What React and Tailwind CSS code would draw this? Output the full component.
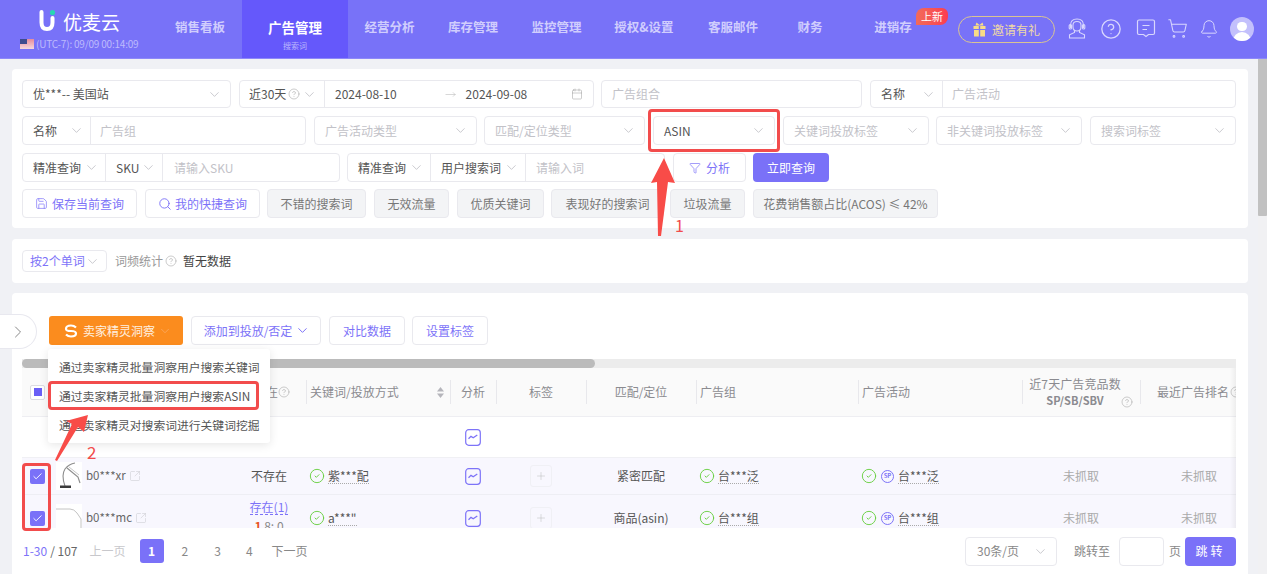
import React from 'react'
import {
  ChevronDown,
  ChevronRight,
  CircleHelp,
  Calendar,
  ShoppingCart,
  Bell,
  Save,
  Search,
  Funnel,
  SquareArrowOutUpRight,
  Plus,
  Check,
  CircleCheck,
  MoveRight,
} from 'lucide-react'

const font = { fontFamily: '"Noto Sans CJK SC", "Noto Sans", sans-serif' }

const navItems = [
  { label: '销售看板', w: 'w-[84px]' },
  { label: '广告管理', w: 'w-[106px]', active: true },
  { label: '经营分析', w: 'w-[83px]' },
  { label: '库存管理', w: 'w-[84px]' },
  { label: '监控管理', w: 'w-[83px]' },
  { label: '授权&设置', w: 'w-[92px]' },
  { label: '客服邮件', w: 'w-[86px]' },
  { label: '财务', w: 'w-[68px]' },
  { label: '进销存', w: 'w-[98px]', badge: true },
]

const tableCols = 'grid grid-cols-[30px_188px_66px_144px_46px_90px_110px_162px_164px_118px_96px] items-center'

function Caret({ className = '' }) {
  return <ChevronDown size={15} strokeWidth={1} className={`text-[#aaaab2] shrink-0 ${className}`} />
}

function SelectBox({ width, text, placeholder, className = '' }) {
  return (
    <div className={`${width} ${className} h-full shrink-0 flex items-center justify-between pl-[10px] pr-[8px] bg-white border border-[#e9e9ee] rounded-[4px]`}>
      <span className={placeholder ? 'text-[#c2c2c8]' : 'text-[#555]'}>{text}</span>
      <Caret />
    </div>
  )
}

function Segment({ width, text, border = true }) {
  return (
    <div className={`${width} h-full shrink-0 flex items-center justify-between pl-[10px] pr-[6px] text-[#555] ${border ? 'border-r border-[#e9e9ee]' : ''}`}>
      <span>{text}</span>
      <Caret />
    </div>
  )
}

function Group({ width, children, className = '' }) {
  return (
    <div className={`${width} ${className} h-full shrink-0 flex items-center bg-white border border-[#e9e9ee] rounded-[4px]`}>
      {children}
    </div>
  )
}

function PresetButton({ width, children, className = '' }) {
  return (
    <div className={`${width} ${className} h-full shrink-0 flex items-center justify-center bg-[#f3f4f6] border border-[#e9e9ee] rounded-[4px] text-[#777]`}>
      {children}
    </div>
  )
}

function ToolButton({ width, children, className = '' }) {
  return (
    <div className={`${width} ${className} h-full shrink-0 flex items-center justify-center bg-white border border-[#e9e9ee] rounded-[4px] text-[#7d73f8]`}>
      {children}
    </div>
  )
}

function TrendIcon() {
  return (
    <svg width="16" height="17" viewBox="0 0 16 17" fill="none" className="mx-auto">
      <rect x="0.7" y="0.7" width="14.6" height="15.6" rx="3" stroke="#7d73f8" strokeWidth="1.2" />
      <path d="M3.5 9.8 L6 7.4 L8.2 8.8 L12.3 6" stroke="#7d73f8" strokeWidth="1.3" />
    </svg>
  )
}

function SortIcon() {
  return (
    <svg width="7" height="11" viewBox="0 0 7 11" fill="#b5b5bb">
      <path d="M3.5 0 L7 4.4 H0 Z" />
      <path d="M3.5 11 L7 6.6 H0 Z" />
    </svg>
  )
}

function LampThumb({ short }) {
  return (
    <svg width="26" height="28" viewBox="0 0 26 28" fill="none" className="shrink-0 bg-white">
      {short ? (
        <path d="M0 5 H14 Q18 5 21 9 L25 15 V28" stroke="#c4c4c4" strokeWidth="1" />
      ) : (
        <>
          <path d="M9 24 Q5 13 9 7 Q13 2 19 1" stroke="#8e8e8e" strokeWidth="1.1" />
          <path d="M11 6 L22 15 L24 21" stroke="#8e8e8e" strokeWidth="1.2" />
          <path d="M13 5 L23 13" stroke="#c6c6c6" strokeWidth="1" />
          <rect x="4" y="23.500" width="11" height="2.500" fill="#3c3c3c" />
        </>
      )}
    </svg>
  )
}

function Checked() {
  return (
    <div className="w-[15px] h-[15px] ml-[8px] rounded-[2px] bg-[#7a71f8] flex items-center justify-center">
      <Check size={11} strokeWidth={2} className="text-white" />
    </div>
  )
}

function Status({ text, sp }) {
  return (
    <div className="flex items-center gap-[3px] pl-[3px]">
      <CircleCheck size={16} strokeWidth={1.4} className="text-[#67cf3f] shrink-0" />
      {sp && (
        <span className="w-[13px] h-[13px] mx-[1px] rounded-full border border-[#7d73f8] text-[#7d73f8] flex items-center justify-center text-[6px] leading-none font-bold shrink-0">
          SP
        </span>
      )}
      <span className="text-[#555] border-b border-dotted border-[#aaa] leading-[15px]">{text}</span>
    </div>
  )
}

function Divider({ h = 'h-[24px]' }) {
  return <span className={`absolute left-0 top-1/2 -translate-y-1/2 w-px ${h} bg-[#e8e8ec]`} />
}

function HeadCell({ children, center, className = '' }) {
  return (
    <div className={`relative h-full flex items-center text-[#8b8b90] ${center ? 'justify-center' : 'pl-[4px]'} ${className}`}>
      <Divider />
      {children}
    </div>
  )
}

export default function App() {
  return (
    <div style={font} className="relative w-[1267px] h-[574px] overflow-hidden bg-[#f0f1f5] text-[12px] leading-none">
      {/* Header */}
      <header className="h-[59px] flex items-stretch bg-[#7872f8] border-b border-[#8d88f9]">
        <div className="w-[158px] shrink-0 pl-[20px] pt-[10px]">
          <div className="flex items-center gap-[7px] pl-[19px]">
            <svg width="17" height="22" viewBox="0 0 17 22" fill="none">
              <path d="M2.5 2 V12.5 Q2.5 19 8 19 Q13.5 19 13.5 12.5 V8" stroke="#fff" strokeWidth="4" strokeLinecap="round" />
              <circle cx="13.5" cy="2.6" r="2.6" fill="#27d6b4" />
            </svg>
            <span className="text-[19px] text-white">优麦云</span>
          </div>
          <div className="flex items-center gap-[2px] mt-[7px] text-[10px] text-[#bdbafc] tracking-[-0.2px]">
            <span className="w-[14px] h-[10px] bg-gradient-to-b from-[#e58a9c] to-[#f4d9de] relative">
              <span className="absolute left-0 top-0 w-[7px] h-[5px] bg-[#3d4b8f]" />
            </span>
            <span>(UTC-7): 09/09 00:14:09</span>
          </div>
        </div>
        <nav className="flex items-stretch">
          {navItems.map((item) => (
            <div
              key={item.label}
              className={`${item.w} relative flex flex-col items-center pt-[21px] font-bold ${item.active ? 'bg-[#6558fb] text-white text-[13.5px]' : 'text-[#d0cdfd] text-[12.5px]'}`}
            >
              <span>{item.label}</span>
              {item.active && <span className="mt-[7px] text-[8px] font-normal text-[#bcb7fd]">搜索词</span>}
              {item.badge && (
                <span className="absolute left-[72px] top-[8px] w-[32px] h-[17px] flex items-center justify-center rounded-tl-[8px] rounded-tr-[6px] rounded-br-[8px] bg-gradient-to-r from-[#f26a5a] to-[#fb3b50] text-white text-[11px] font-normal">
                  上新
                </span>
              )}
            </div>
          ))}
        </nav>
        <div className="ml-[16px] mt-[16px] w-[97px] h-[27px] flex items-center justify-center gap-[6px] rounded-full border border-[#d9c493] text-[#efd9a6]">
          <svg width="13" height="15" viewBox="0 0 13 15" fill="#f8dc86">
            <path d="M3.500 0.500 L6.500 3 L9.500 0.500 L10.500 3.500 H2.500 Z" />
            <rect x="0.500" y="4" width="5.300" height="3" />
            <rect x="7.200" y="4" width="5.300" height="3" />
            <rect x="1" y="8" width="4.800" height="6.500" />
            <rect x="7.200" y="8" width="4.800" height="6.500" />
          </svg>
          <span>邀请有礼</span>
        </div>
        <div className="flex items-center pb-[1px] text-[#d9d7fd]">
          <svg width="20" height="21" viewBox="0 0 20 21" fill="none" stroke="currentColor" strokeWidth="1.1" className="ml-[12px]">
            <path d="M3.500 10 V7.500 Q3.500 1 10 1 Q16.500 1 16.500 7.500 V10" />
            <rect x="2.200" y="6.500" width="2.300" height="4.500" rx="1" />
            <rect x="15.500" y="6.500" width="2.300" height="4.500" rx="1" />
            <path d="M6 7 Q6 3.500 10 3.500 Q14 3.500 14 7 V9 Q14 13 10 13 Q6 13 6 9 Z" />
            <path d="M7.500 12.500 V14.500 L2.500 16.800 V20 H17.500 V16.800 L12.500 14.500 V12.500" />
          </svg>
          <CircleHelp size={22} strokeWidth={1.4} className="ml-[13px]" />
          <svg width="20" height="21" viewBox="0 0 20 21" fill="none" stroke="currentColor" strokeWidth="1.2" className="ml-[14px]">
            <path d="M3 2 H17 Q18.5 2 18.5 3.5 V15 Q18.5 16.5 17 16.5 H12.5 L10 18.500 L7.500 16.500 H3 Q1.500 16.500 1.500 15 V3.500 Q1.500 2 3 2 Z" />
            <path d="M6.500 7.500 H13.500 M6.500 11.500 H11" />
          </svg>
          <ShoppingCart size={21} strokeWidth={1.2} className="ml-[11px]" />
          <Bell size={20} strokeWidth={1.2} className="ml-[11px]" />
          <div className="ml-[11px] w-[24px] h-[24px] rounded-full bg-[#c3c0fc] overflow-hidden flex flex-col items-center">
            <span className="mt-[5px] w-[10px] h-[10px] rounded-full bg-white" />
            <span className="mt-[1px] w-[18px] h-[10px] rounded-t-full bg-white" />
          </div>
        </div>
      </header>

      <div className="flex h-[515px]">
        <main className="flex-1 pl-[12px] pr-[10px] pt-[10px] flex flex-col">
          {/* Filters */}
          <section className="h-[159px] shrink-0 bg-white rounded-[4px] pl-[10px] pr-[12px] pt-[11px] flex flex-col">
            <div className="h-[28px] flex">
              <SelectBox width="w-[209px]" text="优***-- 美国站" />
              <Group width="w-[355px]" className="ml-[8px]">
                <div className="w-[85px] h-full shrink-0 flex items-center pl-[9px] text-[#555] border-r border-[#e9e9ee]">
                  <span>近30天</span>
                  <CircleHelp size={12} strokeWidth={1.2} className="text-[#aaa] ml-[2px]" />
                  <Caret className="ml-[2px]" />
                </div>
                <span className="ml-[10px] text-[#555]">2024-08-10</span>
                <MoveRight size={11} strokeWidth={1} className="ml-[48px] text-[#aaa]" />
                <span className="ml-[10px] text-[#555]">2024-09-08</span>
                <Calendar size={12} strokeWidth={1} className="ml-[44px] text-[#999]" />
              </Group>
              <div className="ml-[7px] w-[261px] h-full flex items-center pl-[10px] border border-[#e9e9ee] rounded-[4px] text-[#c2c2c8]">广告组合</div>
              <Group width="w-[366px]" className="ml-[8px]">
                <Segment width="w-[72px]" text="名称" />
                <span className="pl-[9px] text-[#c2c2c8]">广告活动</span>
              </Group>
            </div>
            <div className="h-[29px] mt-[8px] flex">
              <Group width="w-[284px]">
                <Segment width="w-[68px]" text="名称" />
                <span className="pl-[9px] text-[#c2c2c8]">广告组</span>
              </Group>
              <SelectBox width="w-[163px]" className="ml-[8px]" text="广告活动类型" placeholder />
              <SelectBox width="w-[161px]" className="ml-[7px]" text="匹配/定位类型" placeholder />
              <SelectBox width="w-[122px]" className="ml-[8px]" text="ASIN" />
              <SelectBox width="w-[146px]" className="ml-[8px]" text="关键词投放标签" placeholder />
              <SelectBox width="w-[146px]" className="ml-[7px]" text="非关键词投放标签" placeholder />
              <SelectBox width="w-[146px]" className="ml-[8px]" text="搜索词标签" placeholder />
            </div>
            <div className="h-[29px] mt-[8px] flex gap-[7px]">
              <Group width="w-[318px]">
                <Segment width="w-[83px]" text="精准查询" />
                <Segment width="w-[57px]" text="SKU" />
                <span className="pl-[11px] text-[#c2c2c8]">请输入SKU</span>
              </Group>
              <Group width="w-[318px]">
                <Segment width="w-[83px]" text="精准查询" />
                <Segment width="w-[95px]" text="用户搜索词" />
                <span className="pl-[10px] text-[#c2c2c8]">请输入词</span>
              </Group>
              <ToolButton width="w-[73px]" className="ml-[1px]">
                <Funnel size={12} strokeWidth={1.4} className="mr-[5px]" />
                分析
              </ToolButton>
              <div className="w-[76px] h-full rounded-[4px] bg-[#7a71f8] text-white flex items-center justify-center">立即查询</div>
            </div>
            <div className="h-[29px] mt-[7px] flex">
              <ToolButton width="w-[115px]">
                <Save size={13} strokeWidth={1.3} className="mr-[4px]" />
                保存当前查询
              </ToolButton>
              <ToolButton width="w-[115px]" className="ml-[8px]">
                <Search size={14} strokeWidth={1.6} className="mr-[3px]" />
                我的快捷查询
              </ToolButton>
              <PresetButton width="w-[99px]" className="ml-[7px]">不错的搜索词</PresetButton>
              <PresetButton width="w-[75px]" className="ml-[8px]">无效流量</PresetButton>
              <PresetButton width="w-[87px]" className="ml-[8px]">优质关键词</PresetButton>
              <PresetButton width="w-[113px]" className="ml-[7px]">表现好的搜索词</PresetButton>
              <PresetButton width="w-[75px]" className="ml-[6px]">垃圾流量</PresetButton>
              <PresetButton width="w-[185px]" className="ml-[8px]">花费销售额占比(ACOS) ≤ 42%</PresetButton>
            </div>
          </section>

          {/* Word stats */}
          <section className="h-[44px] shrink-0 mt-[11px] bg-white rounded-[4px] px-[10px] flex items-center">
            <div className="w-[85px] h-[22px] flex items-center justify-between pl-[7px] pr-[6px] border border-[#e9e9ee] rounded-[4px] text-[#7d73f8]">
              <span>按2个单词</span>
              <Caret />
            </div>
            <span className="ml-[8px] text-[#999]">词频统计</span>
            <CircleHelp size={12} strokeWidth={1.2} className="ml-[2px] text-[#aaa]" />
            <span className="ml-[6px] text-[#444]">暂无数据</span>
          </section>

          {/* Results */}
          <section className="relative flex-1 mt-[10px] bg-white rounded-t-[4px] pl-[10px] pr-[12px] pt-[23px]">
            <div className="h-[29px] flex pl-[27px]">
              <div className="w-[134px] h-full flex items-center pl-[15px] bg-[#fb8c1e] rounded-[3px] text-[#fff0e0]">
                <svg width="14" height="14" viewBox="0 0 14 14" fill="none" stroke="#fff" strokeWidth="2.2">
                  <path d="M12 3.500 Q10 1.500 7 1.500 Q2 1.500 2 5 Q2 7 7 7 Q12 7 12 9.500 Q12 12.500 7 12.500 Q4 12.500 2 10.500" />
                </svg>
                <span className="ml-[5px]">卖家精灵洞察</span>
                <ChevronDown size={14} strokeWidth={1.2} className="ml-[3px] text-[#fbb070]" />
              </div>
              <ToolButton width="w-[130px]" className="ml-[8px] pl-[2px]">
                添加到投放/否定
                <ChevronDown size={15} strokeWidth={1.6} className="ml-[3px]" />
              </ToolButton>
              <ToolButton width="w-[76px]" className="ml-[8px]">对比数据</ToolButton>
              <ToolButton width="w-[76px]" className="ml-[7px]">设置标签</ToolButton>
            </div>

            <div className="mt-[14px] h-[169px] overflow-hidden relative">
              <div className="h-[9px] bg-[#ececec]">
                <div className="w-[573px] h-full rounded-full bg-[#bbbbbb]" />
              </div>
              <div className={`${tableCols} h-[49px] bg-[#fafafa] border-b border-[#eeeef2]`}>
                <div className="ml-[8px] w-[15px] h-[15px] border border-[#dcdce2] rounded-[2px] bg-white flex items-center justify-center">
                  <span className="w-[8px] h-[8px] bg-[#6a5ff6]" />
                </div>
                <div />
                <div className="flex items-center justify-end pr-[16px] text-[#8b8b90]">
                  <span>在</span>
                  <CircleHelp size={12} strokeWidth={1.2} className="text-[#aaa]" />
                </div>
                <HeadCell>
                  <span>关键词/投放方式</span>
                  <span className="absolute right-[6px] top-[19px]"><SortIcon /></span>
                </HeadCell>
                <HeadCell center>分析</HeadCell>
                <HeadCell center>标签</HeadCell>
                <HeadCell center>匹配/定位</HeadCell>
                <HeadCell>广告组</HeadCell>
                <HeadCell>广告活动</HeadCell>
                <HeadCell center className="pr-[12px]">
                  <div className="flex flex-col items-center gap-[5px]">
                    <span className="tracking-[0.1px]">近7天广告竞品数</span>
                    <span className="font-bold text-[11px] text-[#8b8b90]">SP/SB/SBV</span>
                  </div>
                  <CircleHelp size={12} strokeWidth={1.2} className="absolute left-[99px] top-[28px] text-[#aaa]" />
                </HeadCell>
                <HeadCell className="!pl-[17px]">
                  <span className="whitespace-nowrap">最近广告排名</span>
                  <CircleHelp size={12} strokeWidth={1.2} className="ml-[1px] shrink-0 text-[#aaa]" />
                </HeadCell>
              </div>
              <div className={`${tableCols} h-[41px] border-b border-[#f0f0f4]`}>
                <div />
                <div />
                <div />
                <div />
                <TrendIcon />
              </div>
              <div className={`${tableCols} h-[37px] bg-[#f8f7fe] border-b border-[#eeeef4]`}>
                <Checked />
                <div className="flex items-center pl-[4px]">
                  <LampThumb />
                  <span className="ml-[4px] text-[11.500px] text-[#666]">b0***xr</span>
                  <SquareArrowOutUpRight size={12} strokeWidth={1.2} className="ml-[3px] text-[#cfcfd4]" />
                </div>
                <div className="text-center text-[#555] pr-[8px]">不存在</div>
                <Status text="紫***配" />
                <TrendIcon />
                <div className="mx-auto w-[22px] h-[22px] border border-[#f0f0f5] rounded-[3px] flex items-center justify-center">
                  <Plus size={12} strokeWidth={1} className="text-[#bbb]" />
                </div>
                <div className="text-center text-[#555]">紧密匹配</div>
                <Status text="台***泛" />
                <Status text="台***泛" sp />
                <div className="text-center text-[#aaa]">未抓取</div>
                <div className="text-center text-[#aaa] pl-[22px]">未抓取</div>
              </div>
              <div className={`${tableCols} h-[46px] bg-[#f8f7fe]`}>
                <Checked />
                <div className="flex items-center pl-[4px]">
                  <LampThumb short />
                  <span className="ml-[4px] text-[11.500px] text-[#666]">b0***mc</span>
                  <SquareArrowOutUpRight size={12} strokeWidth={1.2} className="ml-[3px] text-[#cfcfd4]" />
                </div>
                <div className="flex flex-col items-center pr-[8px] -mt-[5px]">
                  <span className="text-[#7d73f8] border-b border-dashed border-[#7d73f8] leading-[15px]">存在(1)</span>
                  <span className="mt-[5px] text-[#888]"><b className="text-[#e8541e]">1</b> 8: 0</span>
                </div>
                <Status text={'a***"'} />
                <TrendIcon />
                <div className="mx-auto w-[22px] h-[22px] border border-[#f0f0f5] rounded-[3px] flex items-center justify-center">
                  <Plus size={12} strokeWidth={1} className="text-[#bbb]" />
                </div>
                <div className="text-center text-[#555]">商品(asin)</div>
                <Status text="台***组" />
                <Status text="台***组" sp />
                <div className="text-center text-[#aaa]">未抓取</div>
                <div className="text-center text-[#aaa] pl-[22px]">未抓取</div>
              </div>
              <div className="absolute right-0 top-[9px] bottom-0 w-[6px] bg-gradient-to-r from-transparent to-[#0000000d]" />
            </div>

            {/* Pagination */}
            <div className="h-[46px] flex items-center text-[#888]">
              <span className="ml-[1px] text-[#7d73f8]">1-30</span>
              <span className="ml-[3px] text-[#666]">/ 107</span>
              <span className="ml-[12px] text-[#c8c8cc]">上一页</span>
              <span className="ml-[14px] w-[24px] h-[24px] rounded-[3px] bg-[#7a71f8] text-white font-bold flex items-center justify-center">1</span>
              <span className="ml-[18px]">2</span>
              <span className="ml-[26px]">3</span>
              <span className="ml-[25px]">4</span>
              <span className="ml-[19px]">下一页</span>
              <div className="ml-auto w-[92px] h-[29px] flex items-center justify-between pl-[11px] pr-[8px] border border-[#e9e9ee] rounded-[4px] text-[#888]">
                <span>30条/页</span>
                <Caret />
              </div>
              <span className="ml-[17px]">跳转至</span>
              <span className="ml-[9px] w-[45px] h-[29px] border border-[#e9e9ee] rounded-[4px]" />
              <span className="ml-[5px]">页</span>
              <span className="ml-[4px] w-[51px] h-[29px] rounded-[4px] bg-[#7a71f8] text-white flex items-center justify-center tracking-[3px]">跳转</span>
            </div>

            {/* Seller sprite menu */}
            <div className="absolute left-[36px] top-[56px] w-[222px] h-[94px] bg-white rounded-[3px] shadow-[0_2px_10px_rgba(0,0,0,0.1)] pt-[3px] text-[11.800px] text-[#555]">
              <div className="h-[29px] flex items-center pl-[11px]">通过卖家精灵批量洞察用户搜索关键词</div>
              <div className="h-[29px] flex items-center pl-[11px]">通过卖家精灵批量洞察用户搜索ASIN</div>
              <div className="h-[29px] flex items-center pl-[11px]">通过卖家精灵对搜索词进行关键词挖掘</div>
            </div>
          </section>
        </main>

        {/* Page scrollbar */}
        <div className="w-[9px] shrink-0 bg-[#f1f1f3]">
          <div className="h-[157px] bg-[#c1c1c1] rounded-b-[1px]" />
        </div>
      </div>

      {/* Collapse tab */}
      <div className="absolute left-0 top-[314px] w-[37px] h-[35px] bg-white border border-l-0 border-[#e8e8ef] rounded-r-full flex items-center justify-center">
        <ChevronRight size={20} strokeWidth={1.2} className="text-[#888]" />
      </div>

      {/* Red annotations drawn over the shot */}
      <div className="absolute left-[648px] top-[109px] w-[132px] h-[43px] border-[3px] border-[#f24c4c] rounded-[4px]" />
      <div className="absolute left-[48px] top-[381px] w-[211px] h-[29px] border-[3px] border-[#f24c4c] rounded-[4px]" />
      <div className="absolute left-[22px] top-[463px] w-[29px] h-[68px] border-[3px] border-[#f24c4c] rounded-[4px]" />
      <svg className="absolute left-0 top-0 pointer-events-none" width="1267" height="574" viewBox="0 0 1267 574" fill="#f84c48">
        <polygon points="664,158 675,183 668,182 661,236 658,236 657,182 651,183" />
        <polygon points="88,415 84,432 78,427 57,461 55,460 72,424 66,421" />
      </svg>
      <span className="absolute left-[675px] top-[217px] text-[16px] text-[#f24c4c]">1</span>
      <span className="absolute left-[87px] top-[443px] text-[17px] text-[#f24c4c]">2</span>
    </div>
  )
}
